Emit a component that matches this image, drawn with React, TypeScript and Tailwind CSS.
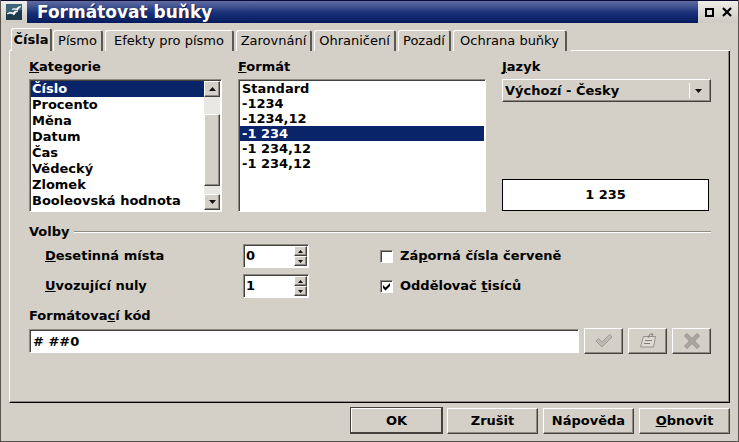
import { useState, type ReactNode } from "react";

const tabs = [
  { label: "Písmo", width: "w-[50px]" },
  { label: "Efekty pro písmo", width: "w-[129px]" },
  { label: "Zarovnání", width: "w-[76px]" },
  { label: "Ohraničení", width: "w-[82px]" },
  { label: "Pozadí", width: "w-[53px]" },
  { label: "Ochrana buňky", width: "w-[114px]" },
];
const categories = ["Číslo", "Procento", "Měna", "Datum", "Čas", "Vědecký", "Zlomek", "Booleovská hodnota"];
const formats = ["Standard", "-1234", "-1234,12", "-1 234", "-1 234,12", "-1 234,12"];

const raised =
  "border border-t-white border-l-white border-r-[#45413c] border-b-[#45413c] shadow-[inset_-1px_-1px_0_#8f8b84]";
const sunken =
  "border border-t-[#8f8b84] border-l-[#8f8b84] border-r-white border-b-white shadow-[inset_1px_1px_0_#45413c]";

function Arrow({ up = false, small = false }: { up?: boolean; small?: boolean }) {
  return (
    <svg className={small ? "h-[3px] w-[5px]" : "h-1 w-[7px]"} viewBox="0 0 8 4" preserveAspectRatio="none" aria-hidden="true">
      <path d={up ? "M0 4 4 0l4 4z" : "M0 0h8L4 4z"} fill="#111" />
    </svg>
  );
}

function Spinner({ id, initial }: { id: string; initial: number }) {
  const [value, setValue] = useState(initial);
  return (
    <div className={`flex h-6 w-[66px] bg-white p-px ${sunken}`}>
      <input
        id={id}
        className="min-w-0 flex-1 bg-white pl-px outline-none"
        value={value}
        onChange={(e) => setValue(Number(e.target.value) || 0)}
      />
      <div className="flex w-[13px] flex-col bg-[#d4d0c8]">
        <button aria-label="Zvýšit" onClick={() => setValue(value + 1)} className={`flex flex-1 items-center justify-center ${raised}`}>
          <Arrow up small />
        </button>
        <button aria-label="Snížit" onClick={() => setValue(Math.max(0, value - 1))} className={`flex flex-1 items-center justify-center ${raised}`}>
          <Arrow small />
        </button>
      </div>
    </div>
  );
}

function Check({ id, on = false, children }: { id: string; on?: boolean; children: ReactNode }) {
  return (
    <div className="flex h-6 items-center gap-[7px]">
      <span className="relative flex">
        <input id={id} type="checkbox" defaultChecked={on} className={`peer size-[13px] appearance-none bg-white ${sunken}`} />
        <svg className="pointer-events-none absolute top-[3px] left-[3px] hidden size-2 peer-checked:block" viewBox="0 0 8 8" aria-hidden="true">
          <path d="M0 2 2.5 4.5 7 0v3L2.5 7.5 0 5z" fill="#000" />
        </svg>
      </span>
      <label htmlFor={id}>{children}</label>
    </div>
  );
}

function IconButton({ label, children }: { label: string; children: ReactNode }) {
  return (
    <button aria-label={label} disabled className={`flex h-[26px] w-[39px] items-center justify-center ${raised}`}>
      <svg className="size-[18px]" viewBox="0 0 18 18" fill="none" aria-hidden="true">
        {children}
      </svg>
    </button>
  );
}

export default function App() {
  const [category, setCategory] = useState(0);
  const [format, setFormat] = useState(3);

  return (
    <div className="flex min-h-screen flex-col border-r border-b border-l border-[#57534d] bg-[#d4d0c8] font-['DejaVu_Sans',sans-serif] text-[13px] leading-4 font-bold text-black">
      <header className="flex h-[23px] border-t border-[#0b0b35] bg-[#d4d0c8]">
        <div className="flex w-[26px] items-center justify-center bg-linear-to-b from-[#f0eeea] to-[#cfcbc3]">
          <svg className="h-4 w-4" viewBox="0 0 16 16" aria-hidden="true">
            <path d="M0 0h16v16H0z" fill="#3f6478" />
            <path d="M0 9 16 6v10H0z" fill="#1c3a4c" />
            <path d="M6 5.500c2-1.500 3.500-.5 4.500-.5C11.500 3 13 2.500 15 2.500 13.500 3.500 12.500 4.500 11.500 6 9.500 5 8 5 6 5.500zM1 10c2-2 4-2 6-1 1-2 3-2 5-2-2 1-3 2-4 4-2-2-4-2-7-1z" fill="#fff" stroke="#fff" strokeWidth=".7" />
          </svg>
        </div>
        <h1 className="flex flex-1 items-center bg-linear-to-b from-[#626da2] via-[#183078] via-55% to-[#061b5e] pl-[10px] text-[17px] text-white [text-shadow:1px_1px_0_#101c48]">
          Formátovat buňky
        </h1>
        <div className="flex w-10 items-center justify-center gap-2 bg-linear-to-b from-[#efede9] to-[#cfcbc3]">
          <button aria-label="Maximalizovat" className="size-[9px] border-2 border-black" />
          <button aria-label="Zavřít">
            <svg className="size-[10px]" viewBox="0 0 10 10" aria-hidden="true">
              <path d="m1 1 8 8M9 1 1 9" stroke="#000" strokeWidth="2.2" />
            </svg>
          </button>
        </div>
      </header>

      <main className="flex flex-1 flex-col px-2">
        <div role="tablist" className="flex h-7 items-end">
          <span className="h-px w-[2px] bg-white" />
          <button role="tab" aria-selected="true" className="mr-px h-[23px] w-[41px] rounded-t-[3px] border-t border-r-2 border-l border-t-white border-r-[#5c5852] border-l-white pb-px font-bold">
            Čísla
          </button>
          <div className="flex gap-[2px]">
            {tabs.map((t) => (
              <button
                key={t.label}
                role="tab"
                aria-selected="false"
                className={`h-[21px] rounded-t-[3px] border-t border-r-2 border-l border-t-white border-r-[#5c5852] border-l-white font-normal whitespace-nowrap ${t.width}`}
              >
                {t.label}
              </button>
            ))}
          </div>
          <span className="ml-1 h-px flex-1 bg-white" />
        </div>

        <section className="flex-1 border-r border-b border-l border-r-black border-b-black border-l-white pt-2 pr-[18px] pl-[19px] shadow-[inset_-1px_-1px_0_#8f8b84]">
          <div className="grid grid-cols-[193fr_248fr_209fr] gap-x-4">
            <div>
              <div id="cat"><u>K</u>ategorie</div>
              <div className={`mt-1 flex h-[133px] bg-white p-px ${sunken}`}>
                <ul role="listbox" aria-labelledby="cat" className="min-w-0 flex-1">
                  {categories.map((c, i) => (
                    <li
                      key={c}
                      role="option"
                      aria-selected={i === category}
                      onClick={() => setCategory(i)}
                      className={`pl-px whitespace-nowrap ${i === category ? "bg-[#0a246a] text-white" : ""}`}
                    >
                      {c}
                    </li>
                  ))}
                </ul>
                <div className="flex w-4 flex-col bg-[#e9e7e3]">
                  <button aria-label="Nahoru" className={`flex h-4 items-center justify-center bg-[#d4d0c8] ${raised}`}><Arrow up /></button>
                  <div className="flex-1 pt-[17px] pb-2">
                    <div className={`h-full bg-[#d4d0c8] ${raised}`} />
                  </div>
                  <button aria-label="Dolů" className={`flex h-4 items-center justify-center bg-[#d4d0c8] ${raised}`}><Arrow /></button>
                </div>
              </div>
            </div>
            <div>
              <div id="fmt"><u>F</u>ormát</div>
              <ul role="listbox" aria-labelledby="fmt" className={`mt-1 h-[133px] bg-white p-px leading-[15px] ${sunken}`}>
                {formats.map((f, i) => (
                  <li
                    key={i}
                    role="option"
                    aria-selected={i === format}
                    onClick={() => setFormat(i)}
                    className={`pl-[2px] ${i === format ? "bg-[#0a246a] text-white" : ""}`}
                  >
                    {f}
                  </li>
                ))}
              </ul>
            </div>
            <div className="flex flex-col">
              <label htmlFor="lang"><u>J</u>azyk</label>
              <div className="relative mt-1">
                <select id="lang" className={`h-[23px] w-full appearance-none bg-[#d4d0c8] pl-[2px] outline-none ${raised}`}>
                  <option>Výchozí - Česky</option>
                </select>
                <span className="pointer-events-none absolute inset-y-1 right-1 flex w-[18px] items-center justify-center border-l border-white">
                  <Arrow />
                </span>
              </div>
              <output className="mt-auto mr-[2px] mb-px flex h-8 items-center justify-center border border-black bg-white">1 235</output>
            </div>
          </div>

          <fieldset className="mt-3">
            <legend className="flex w-full items-center gap-1">
              Volby
              <span className="h-[2px] flex-1 border-t border-b border-t-[#8f8b84] border-b-white" />
            </legend>
            <div className="grid grid-cols-[198px_137px_1fr] gap-y-[6px] pt-1 pl-4">
              <label htmlFor="decimals" className="self-center"><u>D</u>esetinná místa</label>
              <Spinner id="decimals" initial={0} />
              <Check id="negative">Zá<u>p</u>orná čísla červeně</Check>
              <label htmlFor="zeros" className="self-center"><u>U</u>vozující nuly</label>
              <Spinner id="zeros" initial={1} />
              <Check id="thousands" on>Oddělovač <u>t</u>isíců</Check>
            </div>
          </fieldset>

          <label htmlFor="code" className="mt-[10px] block">Formátova<u>c</u>í kód</label>
          <div className="mt-1 flex items-center gap-[5px]">
            <input id="code" defaultValue="# ##0" className={`h-6 min-w-0 flex-1 bg-white pl-[3px] outline-none ${sunken}`} />
            <IconButton label="Přidat">
              <path d="m1 9 2.500-2.500L7 10l7.500-7.500L17 5 7 15z" fill="#bebab3" stroke="#a09c95" />
            </IconButton>
            <IconButton label="Upravit komentář">
              <path d="M4.500 4.500H16.500l-2 10.500H1.500z" fill="#dedad4" stroke="#96928b" />
              <path d="M6 8.500h7M5 11.500h6M9 6l2-4h3l-1.500 3" stroke="#827e77" />
            </IconButton>
            <IconButton label="Odstranit">
              <path d="m1.500 4 2.500-2.500 5 5 5-5L16.500 4l-5 5 5 5-2.500 2.500-5-5-5 5L1.500 14l5-5z" fill="#aaa69f" stroke="#96928b" />
            </IconButton>
          </div>
        </section>

        <footer className="mt-1 mb-[7px] flex items-center justify-end gap-1">
          <button className="flex h-[27px] w-[93px] border-t border-r-2 border-b-2 border-l border-[#45413c]">
            <span className="flex h-full flex-1 items-center justify-center border-t border-l border-white">OK</span>
          </button>
          <div className="flex gap-[5px]">
            <button className={`h-[26px] w-[91px] ${raised}`}>Zrušit</button>
            <button className={`h-[26px] w-[91px] ${raised}`}>Nápověda</button>
            <button className={`h-[26px] w-[91px] ${raised}`}><u>O</u>bnovit</button>
          </div>
        </footer>
      </main>
    </div>
  );
}
